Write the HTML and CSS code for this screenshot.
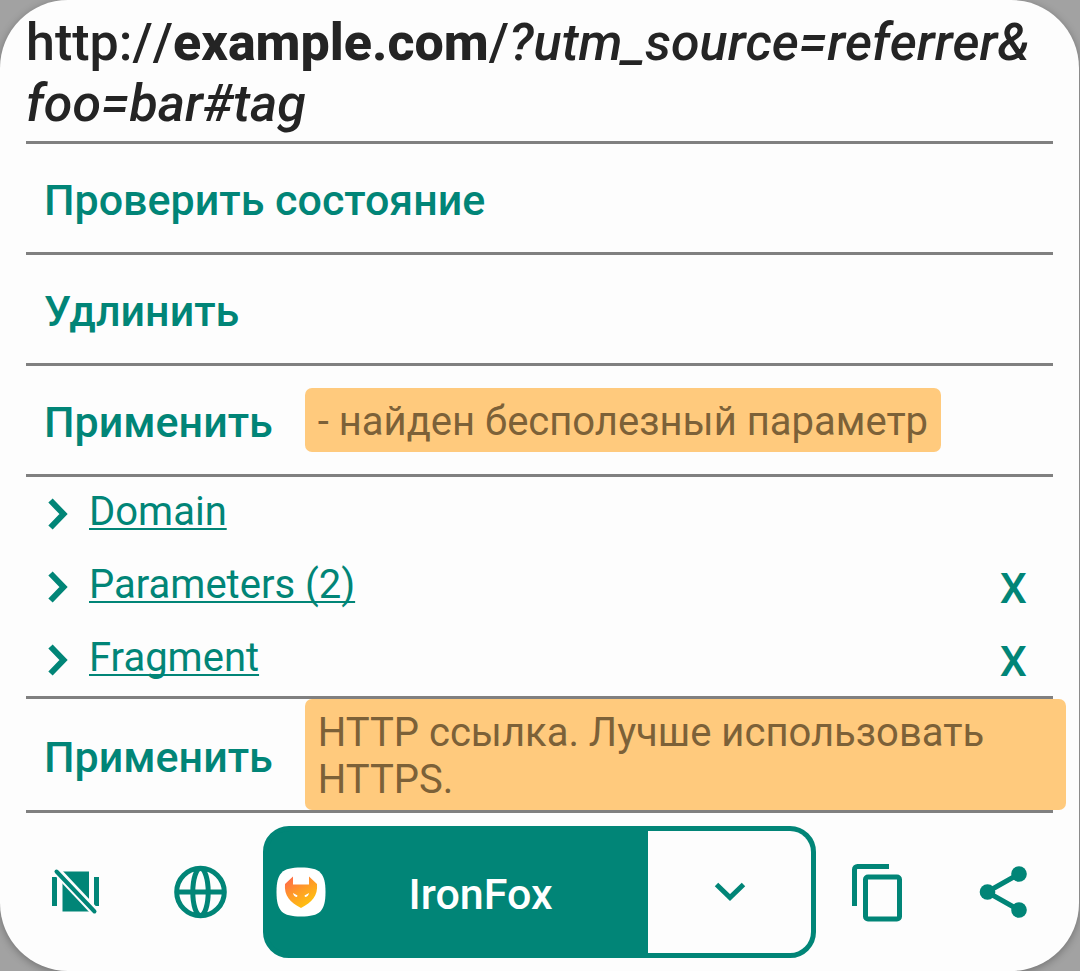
FILE: index.html
```html
<!DOCTYPE html>
<html lang="ru">
<head>
<meta charset="utf-8">
<meta name="viewport" content="width=device-width, initial-scale=1">
<title>example.com</title>
<link rel="stylesheet" href="styles.css">
</head>
<body>
<main class="dialog">
  <section class="modules">
    <p class="url">http://<b>example.com</b>/<i>?utm_source=referrer&amp;<wbr>foo=bar#tag</i></p>
    <div class="row"><button class="action" type="button">Проверить состояние</button></div>
    <div class="row"><button class="action" type="button">Удлинить</button></div>
    <div class="row">
      <button class="action" type="button">Применить</button>
      <span class="badge">- найден бесполезный параметр</span>
    </div>
    <ul class="parts">
      <li class="part">
        <svg class="chevron" viewBox="0 0 20 32" aria-hidden="true"><path d="M2.5 2.5 15.500 16 2.5 29.5"/></svg>
        <a class="part-link" href="#domain">Domain</a>
      </li>
      <li class="part">
        <svg class="chevron" viewBox="0 0 20 32" aria-hidden="true"><path d="M2.5 2.5 15.500 16 2.5 29.5"/></svg>
        <a class="part-link" href="#parameters">Parameters (2)</a>
        <button class="remove" type="button">X</button>
      </li>
      <li class="part">
        <svg class="chevron" viewBox="0 0 20 32" aria-hidden="true"><path d="M2.5 2.5 15.500 16 2.5 29.5"/></svg>
        <a class="part-link" href="#fragment">Fragment</a>
        <button class="remove" type="button">X</button>
      </li>
    </ul>
    <div class="row row-wide">
      <button class="action" type="button">Применить</button>
      <span class="badge">HTTP ссылка. Лучше использовать HTTPS.</span>
    </div>
  </section>
  <footer class="toolbar">
    <button class="tool" type="button" aria-label="Tabs off">
      <svg class="tool-icon" viewBox="0 0 64 64" aria-hidden="true">
        <path fill="currentColor" d="M8 17h5v29H8zM50 17h5v29h-5zM18.500 11.500h26.500v40h-26.500z"/>
        <path class="slash-gap" d="M8 6 55 56"/>
        <path class="slash" d="M12.500 11.500 50.500 51.500"/>
      </svg>
    </button>
    <button class="tool" type="button" aria-label="Web">
      <svg class="tool-icon line" viewBox="0 0 64 64" aria-hidden="true">
        <circle cx="31.500" cy="32" r="23.800"/><path d="M8 32h48"/><ellipse cx="31.500" cy="32" rx="7.700" ry="23.500"/>
      </svg>
    </button>
    <div class="open">
      <button class="open-app" type="button">
        <svg class="app-icon" viewBox="0 0 50 50" aria-hidden="true">
          <defs><linearGradient id="fox" x1="0" y1="0" x2="0.700" y2="1"><stop offset="0" stop-color="#ff6150"/><stop offset="0.500" stop-color="#ff9a28"/><stop offset="1" stop-color="#ffc60c"/></linearGradient></defs>
          <path fill="#fff" d="M25 .5C44 .5 49.500 6 49.500 25S44 49.500 25 49.500.5 44 .5 25 6 .5 25 .5z"/>
          <path fill="url(#fox)" d="M17 9.500v8h16v-8l8 7.500c1 12-5 18-16 24C14 35 8 29 9 17z"/>
          <path fill="#fff" d="m17 26 4.500 2.500-.5 1.500c-2 0-3.500-1.500-4-4zm16 0-4.500 2.500.5 1.500c2 0 3.500-1.500 4-4z"/>
        </svg>
        <span class="app-name">IronFox</span>
      </button>
      <button class="open-menu" type="button" aria-label="More apps">
        <svg class="chevron-down" viewBox="0 0 32 20" aria-hidden="true"><path d="M2.500 2.500 16 15.500 29.500 2.500"/></svg>
      </button>
    </div>
    <button class="tool" type="button" aria-label="Copy">
      <svg class="tool-icon line" viewBox="0 0 64 64" aria-hidden="true">
        <path d="M42 6.500H10.500a3 3 0 0 0-3 3V46"/><rect x="18.500" y="17" width="34" height="42" rx="2.500"/>
      </svg>
    </button>
    <button class="tool" type="button" aria-label="Share">
      <svg class="tool-icon line" viewBox="0 0 64 64" aria-hidden="true">
        <path d="M47 14 15 32l32 18"/><g fill="currentColor" stroke="none"><circle cx="47" cy="14" r="7.800"/><circle cx="15.500" cy="32" r="7.800"/><circle cx="47" cy="50" r="7.800"/></g>
      </svg>
    </button>
  </footer>
</main>
</body>
</html>
```
FILE: styles.css
```css
* { box-sizing: border-box; }

body {
  margin: 0;
  background: #a2a2a2;
  color: #242424;
  font-family: Roboto, "Liberation Sans", sans-serif;
}

button {
  margin: 0;
  padding: 0;
  border: 0;
  background: none;
  color: inherit;
  font: inherit;
  cursor: pointer;
}

.dialog {
  margin-right: 1px;
  border-radius: 68px;
  background: #fdfdfd;
  box-shadow: 0 2px 8px rgba(0, 0, 0, 0.3);
}

.modules { padding: 12px 26px 0; }

.url {
  margin: 0;
  padding-bottom: 7px;
  border-bottom: 3px solid #808080;
  font-size: 52px;
  font-weight: 500;
  font-kerning: none;
  line-height: 61px;
}

.url b { font-weight: 800; }

.row {
  display: flex;
  align-items: center;
  gap: 32px;
  min-height: 111px;
  padding-left: 18px;
  border-bottom: 3px solid #808080;
}

.action, .remove, .open-app {
  font-size: 43px;
  font-weight: 500;
  line-height: 50px;
}

.action, .open-app { padding-top: 4px; }

.action, .remove, .part-link, .tool { color: #018577; }

.badge {
  padding: 10px 13px 7px;
  border-radius: 7px;
  background: #ffca7d;
  color: #7c6138;
  font-size: 40px;
  line-height: 47px;
}

.row-wide .badge { flex: 1; margin-right: -13px; }

.parts {
  margin: 0;
  padding: 0;
  border-bottom: 3px solid #808080;
  list-style: none;
}

.part {
  display: flex;
  align-items: center;
  height: 73px;
  padding: 0 26px 0 22px;
}

.chevron { width: 20px; height: 32px; margin-right: 21px; }

.chevron path, .chevron-down path {
  fill: none;
  stroke: #018577;
  stroke-width: 6;
}

.chevron-down path { stroke-width: 5; }

.part-link {
  padding-bottom: 4px;
  font-size: 40px;
  line-height: 47px;
  text-decoration-thickness: 2px;
  text-decoration-skip-ink: none;
  text-underline-offset: 3px;
}

.remove { margin-left: auto; padding-top: 2px; }

.toolbar { display: flex; padding: 13px; }

.tool {
  display: flex;
  flex: 0 0 125px;
  align-items: center;
  justify-content: center;
}

.tool-icon { width: 64px; height: 64px; }

.line { fill: none; stroke: currentColor; stroke-width: 5; }

.slash-gap { stroke: #fdfdfd; stroke-width: 9; }

.slash { stroke: currentColor; stroke-width: 4; stroke-linecap: round; }

.open {
  display: grid;
  flex: 1;
  grid-template-columns: 7fr 3fr;
  height: 132px;
  border: 5px solid #018577;
  border-radius: 26px;
  background: #018577;
}

.open-app {
  display: flex;
  align-items: center;
  padding: 0 13px 0 8px;
  color: #fff;
}

.app-icon { width: 50px; height: 50px; }

.app-name { flex: 1; padding-top: 4px; }

.open-menu {
  display: flex;
  align-items: center;
  justify-content: center;
  border-radius: 0 21px 21px 0;
  background: #fdfdfd;
}

.chevron-down { width: 32px; height: 20px; }
```
